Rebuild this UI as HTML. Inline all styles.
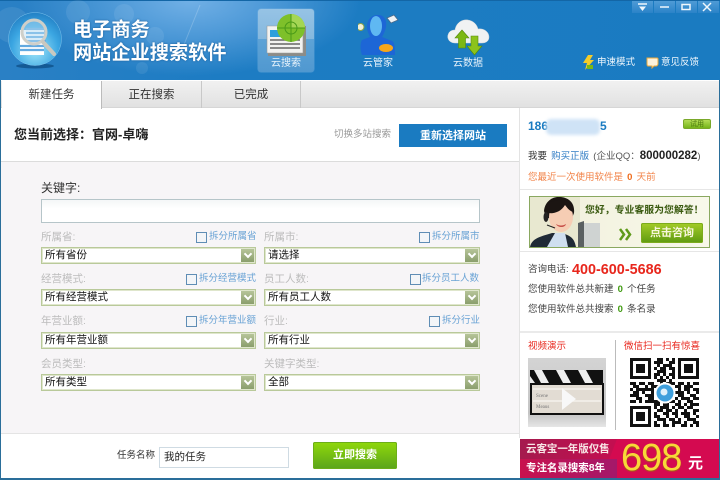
<!DOCTYPE html>
<html><head><meta charset="utf-8">
<style>
html,body{margin:0;padding:0;width:720px;height:480px;overflow:hidden;background:#fff}
body{font-family:"Liberation Sans","Noto Sans CJK SC","WenQuanYi Zen Hei",sans-serif;position:relative}
.a,.t,.sel,.cb{position:absolute}
.t{white-space:nowrap;line-height:14px}
.lab{font-size:10.5px;color:#bcbcbc}
.spl{font-size:9.5px;color:#6aa3d5}
.sel{height:15px;background:#fff;border:1px solid #b9c99a;box-shadow:inset 0 0 0 1px #dfe6cc;font-size:10.5px;line-height:15px;text-indent:3px;color:#111}
.sel i{position:absolute;right:1px;top:1px;width:13px;height:13px;background:linear-gradient(#b6c499,#8a9e6c)}
.sel i:after{content:"";position:absolute;left:3.5px;top:2px;width:4px;height:4px;border:solid #fff;border-width:0 2px 2px 0;transform:rotate(45deg)}
.cb{width:9px;height:9px;border:1px solid #5f8db5;background:#f3f5f8}
.g{font-size:9.5px;color:#444;word-spacing:1.5px}
.tab{position:absolute;top:81px;height:27px;font-size:11.5px;color:#333;text-align:center;line-height:29px}
</style></head><body>
<!-- header -->
<div class="a" style="left:0;top:0;width:720px;height:80px;background:radial-gradient(ellipse 170px 75px at 190px 0,#71b0e6 0,#4a97d6 50%,rgba(27,123,194,0) 100%),linear-gradient(90deg,#2a80c5,#1d7cc3 30%,#1a7bc1);border-top:1px solid #1366a6;box-sizing:border-box"></div>
<svg class="a" style="left:0;top:0" width="240" height="80"><g fill="#fff" opacity=".08"><circle cx="12" cy="25" r="18"/><circle cx="124" cy="14" r="10"/><circle cx="155" cy="36" r="9"/><circle cx="142" cy="68" r="6"/><circle cx="78" cy="12" r="12"/></g><path d="M200 5L177 62" stroke="#fff" stroke-opacity=".2" fill="none"/></svg>
<!-- logo -->
<svg class="a" style="left:6px;top:10px" width="60" height="60" viewBox="0 0 60 60">
<defs><radialGradient id="b" cx=".5" cy=".7" r=".8"><stop offset="0" stop-color="#a4e8fa"/><stop offset=".55" stop-color="#3ba6e2"/><stop offset="1" stop-color="#1a72ba"/></radialGradient></defs>
<ellipse cx="29" cy="56" rx="19" ry="2.5" fill="#0c4a80" opacity=".7"/>
<circle cx="29" cy="29" r="26.5" fill="url(#b)" stroke="#7cc4ee" stroke-width=".5"/>
<path d="M14 20h24v25H14z" fill="#fff"/>
<path d="M20 19h20M20 23h20M20 27h20M20 31h20M14 36h24M14 40h24" stroke="#62a9e0" stroke-width="2.2"/>
<circle cx="28" cy="22" r="12" fill="#bfe0f4" fill-opacity=".45" stroke="#cfcfc9" stroke-width="3"/>
<path d="M37 32l11 12" stroke="#c9c8c0" stroke-width="4" stroke-linecap="round"/>
</svg>
<div class="t" style="left:73px;top:19px;font-size:19.2px;line-height:24px;font-weight:700;color:#fff;text-shadow:0 0 2px #1a5c96">电子商务</div>
<div class="t" style="left:73px;top:42px;font-size:19.2px;line-height:24px;font-weight:700;color:#fff;text-shadow:0 0 2px #1a5c96">网站企业搜索软件</div>
<!-- cloud search tile -->
<div class="a" style="left:258px;top:9px;width:56px;height:63px;border-radius:3px;background:linear-gradient(#96c3e5 0,#85b8de 48%,#5ea3d6 48%,#5098d0 100%);box-shadow:0 0 1px #b8d8ee"></div>
<svg class="a" style="left:264px;top:12px" width="46" height="46" viewBox="0 0 46 46">
<path d="M4 14h38v30H4z" fill="#8c8c88"/><path d="M3 14h36v27H3z" fill="#f2f2f0" stroke="#999" stroke-width=".6"/>
<path d="M6 18h20v7H6z" fill="#2e9fdc"/><path d="M6 28h30M6 32h30M6 36h30" stroke="#666" stroke-width="1.4"/>
<circle cx="27" cy="16" r="14" fill="#7ec02a"/><path d="M27 16L27 2A14 14 0 0 1 41 16z" fill="#a4d654"/>
<g fill="none" stroke="#4a9a18"><circle cx="27" cy="16" r="6"/><path d="M13 16h28M27 2v28"/></g>
</svg>
<div class="t" style="left:258px;top:57px;width:56px;text-align:center;font-size:10px;color:#e8f3fb">云搜索</div>
<!-- 云管家 -->
<svg class="a" style="left:358px;top:13px" width="42" height="44" viewBox="0 0 42 44">
<circle cx="2.5" cy="14" r="3.5" fill="#f1efd8" stroke="#8aa24a"/>
<path d="M20 2c7 0 9 6 8 12-1 5-3 8-4 10l10 4c3 2 3 7 3 14H4c-2-6-2-11 0-15l8-3c-1-3-3-6-3-10C9 7 13 2 20 2z" fill="#1d66d6"/>
<ellipse cx="18" cy="13" rx="6" ry="10" fill="#5fb8f2"/>
<ellipse cx="28" cy="35" rx="7" ry="4" fill="#f7a61a"/>
<path d="M29 5l7-3 4 5-7 3z" fill="#eef2f5" stroke="#4a6a8a" stroke-width=".8"/>
</svg>
<div class="t" style="left:360px;top:57px;width:36px;text-align:center;font-size:10px;color:#e8f3fb">云管家</div>
<!-- 云数据 -->
<svg class="a" style="left:446px;top:16px" width="44" height="40" viewBox="0 0 44 40">
<path d="M9 27C3 27 1 22 2 19c1-4 4-5 7-5 1-7 7-11 13-10 6 1 9 5 10 9 6-1 11 3 11 8 0 4-3 6-7 6z" fill="#f0f2f3" stroke="#cfd6da" stroke-width=".5"/>
<path d="M16 14l7 8h-3.500v10h-7V22H9z" fill="#7cb814" stroke="#558a0c" stroke-width=".6"/>
<path d="M25 20h7v10h4l-7.500 9-7.500-9h4z" fill="#8cc31c" stroke="#558a0c" stroke-width=".6"/>
</svg>
<div class="t" style="left:450px;top:57px;width:36px;text-align:center;font-size:10px;color:#e8f3fb">云数据</div>
<!-- win controls -->
<div class="a" style="left:632px;top:1px;width:21px;height:12px;background:linear-gradient(#4e9bd6,#2a83c8)"></div>
<div class="a" style="left:654px;top:1px;width:21px;height:12px;background:linear-gradient(#4e9bd6,#2a83c8)"></div>
<div class="a" style="left:676px;top:1px;width:21px;height:12px;background:linear-gradient(#4e9bd6,#2a83c8)"></div>
<div class="a" style="left:698px;top:1px;width:21px;height:12px;background:linear-gradient(#4e9bd6,#2a83c8)"></div>
<svg class="a" style="left:632px;top:1px" width="88" height="12"><g fill="none" stroke="#eef6fc" stroke-width="1.500"><path d="M6 3h9"/><path d="M28 6h9M50 3.500h8v5h-8zM71 2l8 8M79 2l-8 8"/></g><path d="M7 5.500h7L10.500 10z" fill="#eef6fc"/></svg>
<!-- speed/feedback -->
<svg class="a" style="left:582px;top:55px" width="12" height="15"><path d="M6 0h5L8 5h4L3 15l2-7H1z" fill="#f4cc2a"/><path d="M5 10h6v4H5z" fill="#7cb814"/></svg>
<div class="t" style="left:597px;top:56px;font-size:9.500px;color:#eef6fc">申速模式</div>
<svg class="a" style="left:646px;top:57px" width="13" height="12"><path d="M1 1h10c1 0 1 1 1 1v5c0 1-1 2-2 2H8l-2 2V9H2C1 9 1 8 1 7z" fill="#fbf2dc" stroke="#e9a83a"/></svg>
<div class="t" style="left:661px;top:56px;font-size:9.500px;color:#eef6fc">意见反馈</div>
<!-- frame edges -->
<div class="a" style="left:0;top:80px;width:1px;height:400px;background:#2a6e9a"></div>
<div class="a" style="left:719px;top:80px;width:1px;height:400px;background:#2a6e9a"></div>
<!-- tabs -->
<div class="a" style="left:1px;top:81px;width:718px;height:27px;background:linear-gradient(#f1f1f1,#e1e1e1);border-bottom:1px solid #d6d6d6;box-sizing:border-box"></div>
<div class="tab" style="left:2px;width:100px;background:#fff;height:28px;border-right:1px solid #bbb;box-sizing:border-box">新建任务</div>
<div class="tab" style="left:102px;width:100px;border-right:1px solid #c8c8c8;box-sizing:border-box">正在搜索</div>
<div class="tab" style="left:202px;width:99px;border-right:1px solid #c8c8c8;box-sizing:border-box">已完成</div>
<!-- title row -->
<div class="t" style="left:14px;top:128px;font-size:13px;font-weight:700;color:#222">您当前选择：官网-卓嗨</div>
<div class="t" style="left:334px;top:128px;font-size:9.500px;color:#999">切换多站搜索</div>
<div class="a" style="left:399px;top:124px;width:108px;height:23px;background:#1a7bc1;color:#fff;font-size:11px;font-weight:700;text-align:center;line-height:24px">重新选择网站</div>
<!-- form area -->
<div class="a" style="left:1px;top:161px;width:518px;height:273px;background:#f7f5f7;border-top:1px solid #dcdcdc;border-bottom:1px solid #e4e4e4;box-sizing:border-box"></div>
<div class="a" style="left:519px;top:108px;width:1px;height:330px;background:#e3e3e3"></div>
<div class="t" style="left:41px;top:181px;font-size:12px;color:#333">关键字:</div>
<div class="a" style="left:41px;top:199px;width:439px;height:24px;box-sizing:border-box;border:1px solid #b6c5c9;background:linear-gradient(#f4f6f7,#fff 40%)"></div>

<div class="t lab" style="left:41px;top:230px">所属省:</div>
<div class="cb" style="left:196px;top:232px"></div><div class="t spl" style="left:209px;top:230px">拆分所属省</div>
<div class="t lab" style="left:264px;top:230px">所属市:</div>
<div class="cb" style="left:419px;top:232px"></div><div class="t spl" style="left:432px;top:230px">拆分所属市</div>
<div class="sel" style="left:41px;top:247px;width:213px">所有省份<i></i></div>
<div class="sel" style="left:264px;top:247px;width:214px">请选择<i></i></div>

<div class="t lab" style="left:41px;top:272px">经营模式:</div>
<div class="cb" style="left:186px;top:274px"></div><div class="t spl" style="left:199px;top:272px">拆分经营模式</div>
<div class="t lab" style="left:264px;top:272px">员工人数:</div>
<div class="cb" style="left:410px;top:274px"></div><div class="t spl" style="left:422px;top:272px">拆分员工人数</div>
<div class="sel" style="left:41px;top:289px;width:213px">所有经营模式<i></i></div>
<div class="sel" style="left:264px;top:289px;width:214px">所有员工人数<i></i></div>

<div class="t lab" style="left:41px;top:314px">年营业额:</div>
<div class="cb" style="left:186px;top:316px"></div><div class="t spl" style="left:199px;top:314px">拆分年营业额</div>
<div class="t lab" style="left:264px;top:314px">行业:</div>
<div class="cb" style="left:429px;top:316px"></div><div class="t spl" style="left:442px;top:314px">拆分行业</div>
<div class="sel" style="left:41px;top:332px;width:213px">所有年营业额<i></i></div>
<div class="sel" style="left:264px;top:332px;width:214px">所有行业<i></i></div>

<div class="t lab" style="left:41px;top:357px">会员类型:</div>
<div class="t lab" style="left:264px;top:357px">关键字类型:</div>
<div class="sel" style="left:41px;top:374px;width:213px">所有类型<i></i></div>
<div class="sel" style="left:264px;top:374px;width:214px">全部<i></i></div>

<!-- footer -->
<div class="t" style="left:117px;top:449px;font-size:9.500px;color:#333">任务名称</div>
<div class="a" style="left:159px;top:447px;width:130px;height:21px;box-sizing:border-box;border:1px solid #cfdbe3;background:#fff;font-size:10.500px;line-height:19px;padding-left:4px;color:#222">我的任务</div>
<div class="a" style="left:313px;top:442px;width:84px;height:27px;border-radius:2px;background:linear-gradient(#90d80a,#5aa41c);box-shadow:inset 0 0 0 1px #6cae18;color:#fff;font-size:11px;font-weight:700;text-align:center;line-height:27px">立即搜索</div>
<div class="a" style="left:0;top:478px;width:720px;height:2px;background:#2a6e9a"></div>

<!-- right panel -->
<div class="t" style="left:528px;top:119px;font-size:12px;font-weight:700;color:#1a7bc1">186</div>
<div class="a" style="left:546px;top:119px;width:54px;height:16px;background:#cfe3f6;border-radius:5px;filter:blur(1.5px)"></div>
<div class="t" style="left:600px;top:119px;font-size:12px;font-weight:700;color:#1a7bc1">5</div>
<div class="a" style="left:683px;top:119px;width:28px;height:10px;border-radius:2px;background:linear-gradient(#b4dc56,#76b51a);border:1px solid #7aa82a;box-sizing:border-box;color:#4e7a10;font-size:7px;text-align:center;line-height:9px">试用</div>
<div class="t g" style="left:528px;top:149px;color:#333">我要 <span style="color:#2f7cc4">购买正版</span> <span style="color:#555;word-spacing:0">(企业QQ：</span><b style="color:#222;font-size:11.5px">800000282</b><span style="color:#555">)</span></div>
<div class="t" style="left:528px;top:171px;font-size:9.500px;color:#f2844a;word-spacing:1.5px">您最近一次使用软件是 <b style="color:#ef6c1c">0</b> 天前</div>
<div class="a" style="left:520px;top:189px;width:199px;height:1px;background:#e6e6e6"></div>
<!-- banner -->
<div class="a" style="left:529px;top:196px;width:181px;height:52px;box-sizing:border-box;border:1px solid #8aa860;background:linear-gradient(90deg,#f1f0dc,#f8f8ea);overflow:hidden"></div>
<svg class="a" style="left:530px;top:197px" width="100" height="50" viewBox="0 0 100 50">
<path d="M0 0h50v50H0z" fill="#e8e8d0"/>
<path d="M48 26h22v24H48z" fill="#cfd3d2"/><path d="M48 26l6-2v26h-6z" fill="#5a6062"/>
<g transform="translate(7 0)">
<path d="M-7 50c2-10 14-11 22-14h10c8 3 12 4 14 14z" fill="#1f2a36"/><path d="M10 50l8-14h10l3 14z" fill="#cfdff0"/>
<path d="M7 14C8 4 16-1 24 0c9 1 14 7 13 16l-2 5H9z" fill="#1b1512"/>
<ellipse cx="24" cy="20" rx="12" ry="15" fill="#f6cdb4"/>
<path d="M12 16c4 1 12-1 16-8 3 4 5 6 8 7l0-7-11-6-12 3z" fill="#1b1512"/>
<path d="M19 27c3 2 7 2 10 0-1 4-8 4-10 0z" fill="#c8504a"/>
<ellipse cx="9" cy="20" rx="2.500" ry="5" fill="#222"/><path d="M10 28l8 3" stroke="#222" stroke-width="1.200"/>
</g>
</svg>
<div class="t" style="left:585px;top:204px;font-size:9.900px;font-weight:700;color:#3a5a10">您好，专业客服为您解答！</div>
<svg class="a" style="left:619px;top:228px" width="14" height="13"><path d="M1 1l4 5.500-4 5.500M7 1l4 5.500-4 5.500" fill="none" stroke="#5f9a1a" stroke-width="2.500"/></svg>
<div class="a" style="left:641px;top:223px;width:62px;height:20px;border-radius:2px;background:linear-gradient(#a4cc28,#5e9a10);box-shadow:inset 0 0 0 1px #7cab1c;color:#f8f6dc;font-size:11px;font-weight:700;text-align:center;line-height:20px">点击咨询</div>
<div class="a" style="left:520px;top:251px;width:199px;height:1px;background:#e6e6e6"></div>
<div class="t g" style="left:528px;top:263px">咨询电话:</div>
<div class="t" style="left:572px;top:263px;font-size:14.4px;font-weight:700;color:#e8261c">400-600-5686</div>
<div class="t g" style="left:528px;top:283px">您使用软件总共新建 <b style="color:#3f9a10">0</b> 个任务</div>
<div class="t g" style="left:528px;top:303px">您使用软件总共搜索 <b style="color:#3f9a10">0</b> 条名录</div>
<div class="a" style="left:520px;top:331px;width:199px;height:2px;background:#eaeaea"></div>
<div class="t" style="left:528px;top:340px;font-size:9.500px;color:#e8261c">视频演示</div>
<div class="t" style="left:624px;top:340px;font-size:9.500px;color:#e8261c">微信扫一扫有惊喜</div>
<div class="a" style="left:615px;top:340px;width:1px;height:90px;background:#bbb"></div>
<!-- clapper -->
<svg class="a" style="left:528px;top:358px" width="78" height="69" viewBox="0 0 78 69">
<defs><linearGradient id="v" x1="0" y1="0" x2="0" y2="1"><stop offset="0" stop-color="#d4d4d4"/><stop offset=".8" stop-color="#c4c4c4"/><stop offset="1" stop-color="#e6e6e6"/></linearGradient></defs>
<path d="M0 0h78v69H0z" fill="url(#v)"/>
<path d="M2 12h73v13H2z" fill="#111"/>
<path d="M6 12h8l7 13h-8zM28 12h8l7 13h-8zM50 12h8l7 13h-8zM2 18v7h5z" fill="#eee"/>
<path d="M3 26h72v30H3z" fill="#e2dcd3" stroke="#111" stroke-width="2"/>
<path d="M5 31h68M5 43h68" stroke="#f5f2ec" stroke-width="1.500"/>
<path d="M34 30l14 11-14 11z" fill="#f8f8f8"/>
<text x="8" y="39" font-size="5" fill="#777" font-family="Liberation Serif,serif">Scene</text>
<text x="8" y="50" font-size="5" fill="#777" font-family="Liberation Serif,serif">Meaus</text>
</svg>
<!-- QR -->
<svg class="a" style="left:630px;top:358px" width="69" height="69" viewBox="0 0 23 23" shape-rendering="crispEdges">
<path fill="none" stroke="#111" d="M0 .5h7M9 .5h2M12 .5h1M14 .5h1M16 .5h7M0 1.500h1M6 1.500h1M8 1.500h3M13 1.500h2M16 1.500h1M22 1.500h1M0 2.500h1M2 2.500h3M6 2.500h1M9 2.500h1M11 2.500h3M16 2.500h1M18 2.500h3M22 2.500h1M0 3.500h1M2 3.500h3M6 3.500h1M8 3.500h1M10 3.500h2M13 3.500h2M16 3.500h1M18 3.500h3M22 3.500h1M0 4.500h1M2 4.500h3M6 4.500h1M9 4.500h3M14 4.500h1M16 4.500h1M18 4.500h3M22 4.500h1M0 5.500h1M6 5.500h1M8 5.500h2M11 5.500h1M13 5.500h2M16 5.500h1M22 5.500h1M0 6.500h7M8 6.500h1M10 6.500h1M12 6.500h1M14 6.500h1M16 6.500h7M9 7.500h3M13 7.500h1M0 8.500h2M3 8.500h2M6 8.500h2M10 8.500h1M12 8.500h3M16 8.500h2M19 8.500h1M21 8.500h2M1 9.500h2M5 9.500h1M7 9.500h3M15 9.500h2M18 9.500h3M0 10.500h1M2 10.500h4M6 10.500h2M16 10.500h1M18 10.500h2M21 10.500h2M1 11.500h2M4 11.500h1M7 11.500h1M15 11.500h3M19 11.500h1M22 11.500h1M0 12.500h3M5 12.500h3M16 12.500h2M20 12.500h2M2 13.500h2M6 13.500h2M15 13.500h1M17 13.500h3M21 13.500h2M0 14.500h2M3 14.500h1M5 14.500h4M9 14.500h1M13 14.500h2M16 14.500h1M19 14.500h2M8 15.500h2M11 15.500h2M15 15.500h2M18 15.500h1M20 15.500h3M0 16.500h7M8 16.500h1M10 16.500h3M14 16.500h1M16 16.500h2M19 16.500h2M0 17.500h1M6 17.500h1M9 17.500h2M12 17.500h2M15 17.500h1M18 17.500h1M21 17.500h2M0 18.500h1M2 18.500h3M6 18.500h1M8 18.500h1M11 18.500h2M14 18.500h2M17 18.500h3M21 18.500h1M0 19.500h1M2 19.500h3M6 19.500h1M8 19.500h2M12 19.500h1M15 19.500h1M18 19.500h2M22 19.500h1M0 20.500h1M2 20.500h3M6 20.500h1M9 20.500h3M13 20.500h2M16 20.500h1M19 20.500h3M0 21.500h1M6 21.500h1M8 21.500h1M11 21.500h1M14 21.500h3M18 21.500h1M21 21.500h2M0 22.500h7M8 22.500h2M11 22.500h2M14 22.500h1M17 22.500h2M20 22.500h1M22 22.500h1"/>
</svg>
<svg class="a" style="left:654px;top:382px" width="22" height="22"><circle cx="11" cy="11" r="10.500" fill="#fff"/><circle cx="11" cy="11" r="8.500" fill="#3f9fdc"/><circle cx="10" cy="10" r="3.500" fill="#dff0fa"/></svg>
<!-- promo -->
<div class="a" style="left:520px;top:439px;width:199px;height:39px;background:#d40a50;overflow:hidden"></div>
<div class="a" style="left:520px;top:439px;width:97px;height:20px;background:linear-gradient(90deg,#a51a4e,#c40e50);clip-path:polygon(0 0,100% 0,92% 100%,0 100%)"></div>
<div class="a" style="left:520px;top:459px;width:97px;height:19px;background:linear-gradient(90deg,#c8124e,#a4186a)"></div>
<div class="t" style="left:526px;top:442px;font-size:10.500px;font-weight:700;color:#f8e6e6;letter-spacing:-.05px">云客宝一年版仅售</div>
<div class="t" style="left:526px;top:461px;font-size:10.500px;font-weight:700;color:#fff;letter-spacing:-.05px">专注名录搜索8年</div>
<div class="t" style="left:621px;top:439px;font-size:38px;line-height:38px;font-family:'Liberation Sans',sans-serif;color:#f8d838;text-shadow:0 1px 1px #a06a10;letter-spacing:-1px">698</div>
<div class="t" style="left:688px;top:454px;font-size:15px;line-height:20px;font-weight:700;color:#fff">元</div>
</body></html>
